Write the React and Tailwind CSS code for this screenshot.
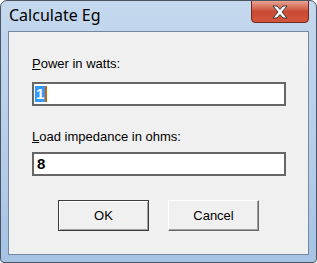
export default function App() {
  return (
    <div className="w-[317px] h-[263px] bg-white">
      <div className="w-[317px] h-[263px] rounded-t-[7px] rounded-b-[4px] border border-[#4a5462] bg-gradient-to-b from-[#c4d8ee] via-[#b8cfe9] to-[#a6c3e4] flex flex-col overflow-hidden">
        <div className="h-[30px] flex items-start shrink-0 relative">
          <div className="pl-[8px] pt-[5px] text-[16px] leading-[19px] text-black" style={{ fontFamily: '"Noto Sans", "Open Sans", sans-serif' }}>
            Calculate Eg
          </div>
          <div className="absolute right-[7px] top-[-1px] w-[58px] h-[23px] rounded-b-[4px] border border-[#6b2a23] bg-gradient-to-b from-[#e8a493] via-[#c94a34] to-[#d5563b] flex items-center justify-center">
            <svg width="20" height="14" viewBox="0 0 20 14">
              <path d="M3 1 L7 1 L10 4.5 L13 1 L17 1 L12 7 L17 13 L13 13 L10 9.5 L7 13 L3 13 L8 7 Z" fill="#ffffff" stroke="#3a3a3a" strokeWidth="1" strokeLinejoin="round" />
            </svg>
          </div>
        </div>
        <div className="mx-[7px] mb-[7px] flex-1 border border-[#7488a0] bg-[#f0f0f0] flex flex-col" style={{ fontFamily: '"Liberation Sans", Arial, sans-serif' }}>
          <div className="pl-[23px] pt-[24px] text-[13px] leading-[16px] text-black">
            <span className="underline underline-offset-1">P</span>ower in watts:
          </div>
          <div className="ml-[23px] mt-[10px] w-[254px] h-[24px] border-2 border-[#666666] bg-white flex items-center pl-[1px]">
            <span className="bg-[#3399ff] text-white font-bold text-[15px] leading-[16px] px-[1px]">1</span>
            <span className="w-[2px] h-[16px] bg-[#c86400]"></span>
          </div>
          <div className="pl-[23px] pt-[23px] text-[13px] leading-[16px] text-black">
            <span className="underline underline-offset-1">L</span>oad impedance in ohms:
          </div>
          <div className="ml-[23px] mt-[7px] w-[254px] h-[24px] border-2 border-[#666666] bg-white flex items-center pl-[3px]">
            <span className="text-black font-bold text-[15px] leading-[16px]">8</span>
          </div>
          <div className="flex pl-[49px] gap-[19px] mt-[24px]">
            <button className="w-[91px] h-[31px] border border-[#3c3c3c] bg-[#f0f0f0] shadow-[inset_1px_1px_0_#ffffff,inset_-1px_-1px_0_#a0a0a0] text-[13px] text-black">
              OK
            </button>
            <button className="w-[91px] h-[31px] border border-t-white border-l-white border-r-[#696969] border-b-[#696969] bg-[#f0f0f0] shadow-[inset_-1px_-1px_0_#a0a0a0] text-[13px] text-black">
              Cancel
            </button>
          </div>
        </div>
      </div>
    </div>
  );
}
